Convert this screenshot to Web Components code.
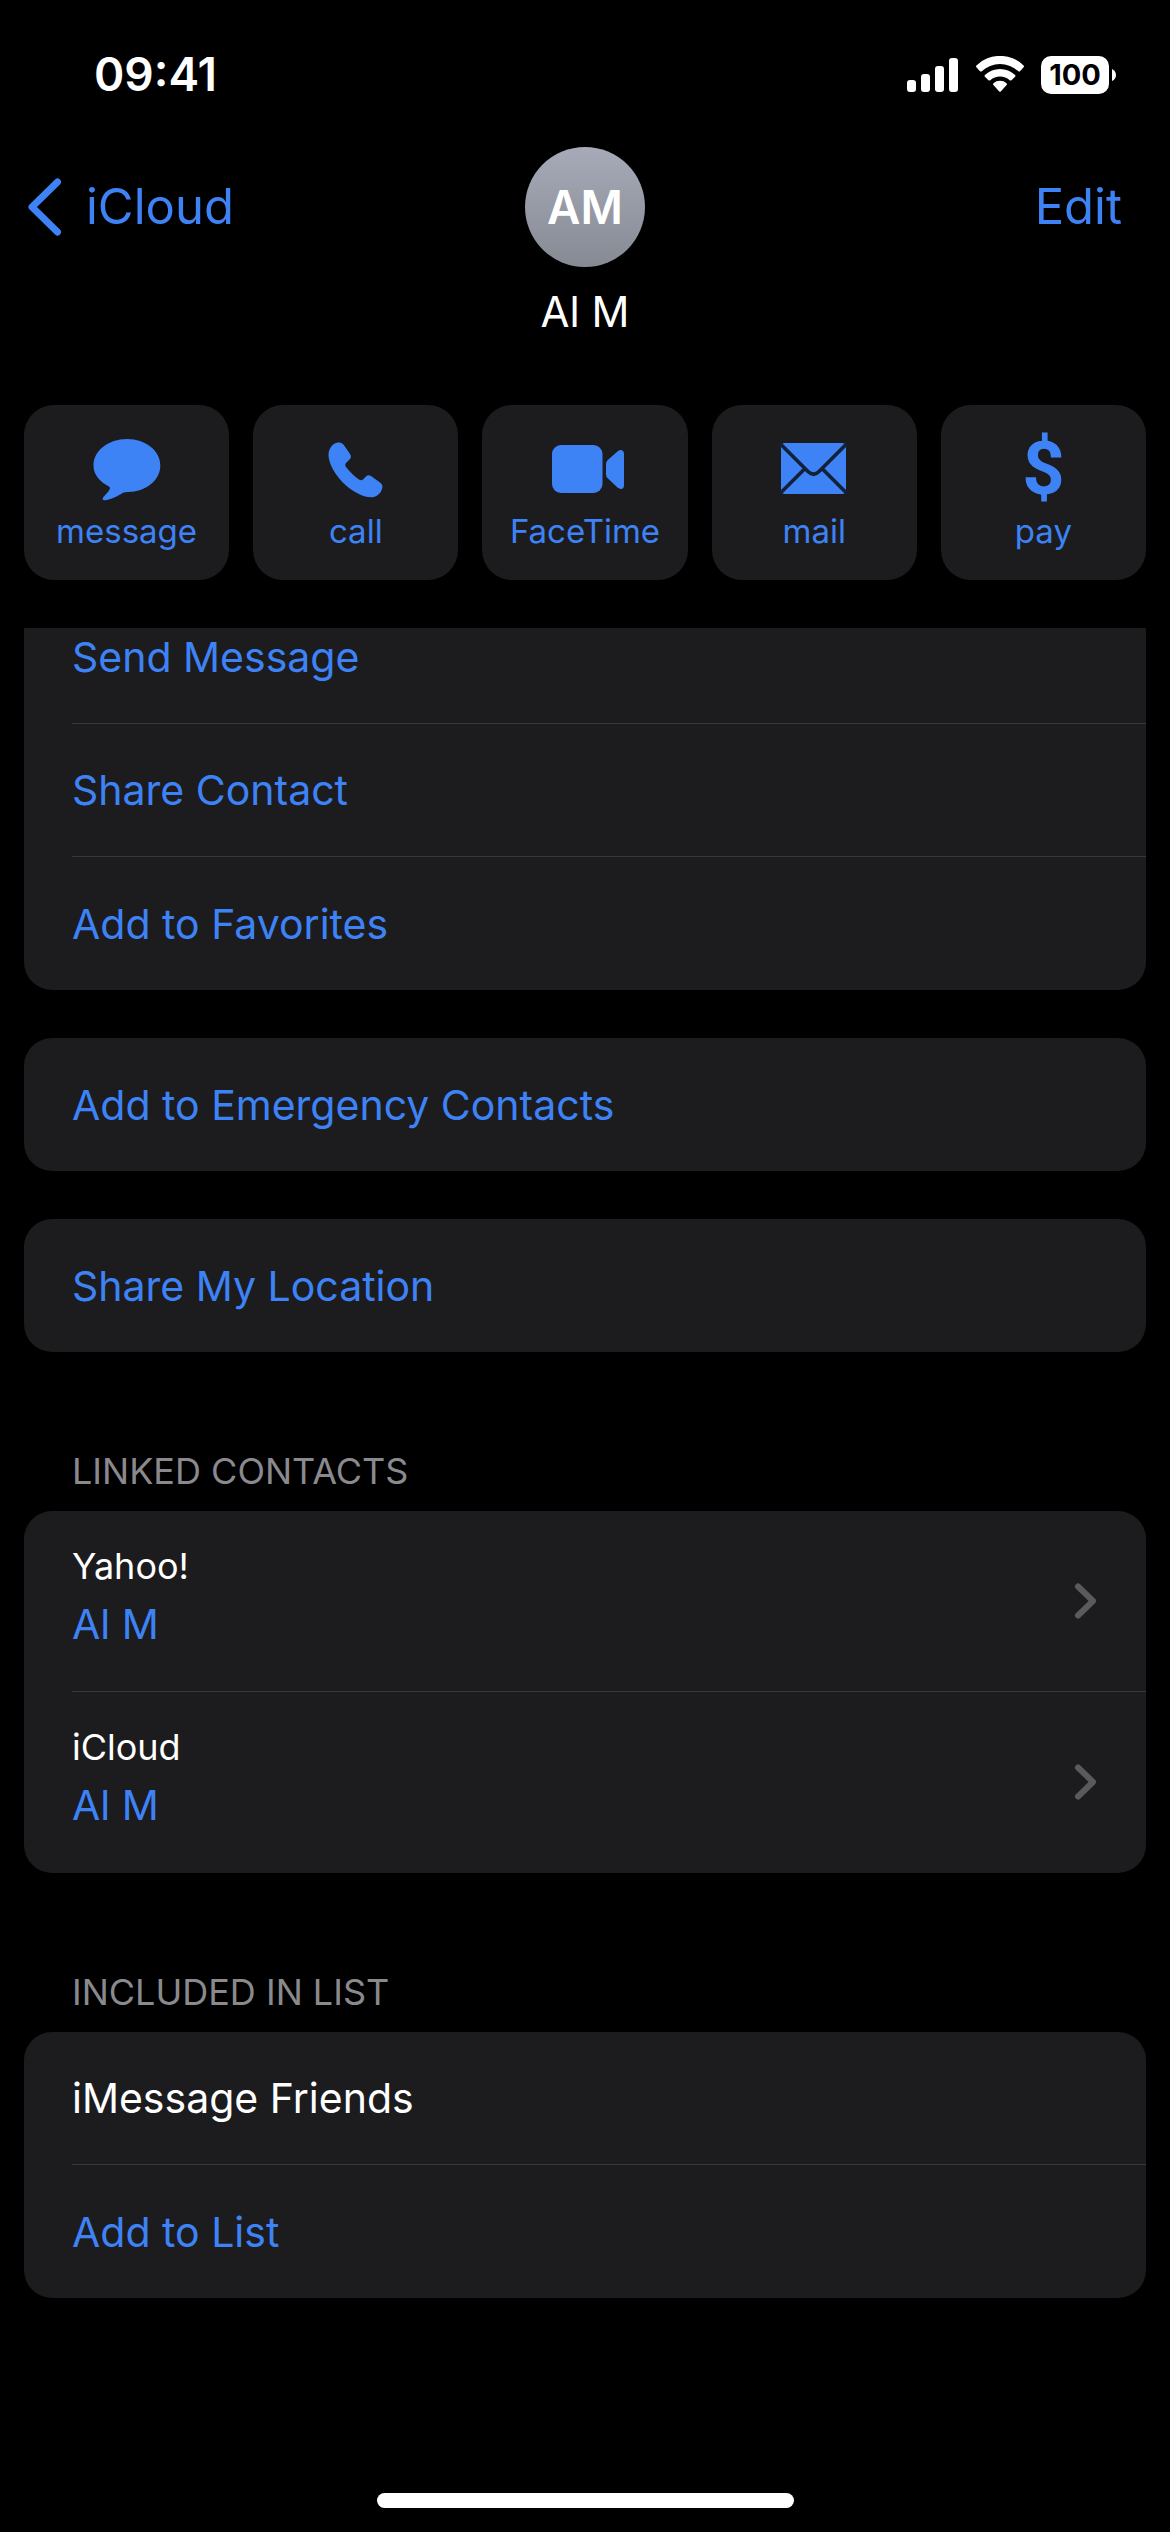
<!DOCTYPE html>
<html lang="en">
<head>
<meta charset="utf-8">
<meta name="viewport" content="width=device-width, initial-scale=1">
<title>Al M</title>
<style>
  :root {
    --blue: #3e83f6;
    --card: #1c1c1e;
    --line: #38383a;
    --grey: #8a8a8e;
    --text: #ffffff;
  }
  body {
    margin: 0;
    background: #000;
    color: var(--text);
    font-family: Inter, "Liberation Sans", sans-serif;
    font-size: 41px;
    line-height: 52px;
  }
</style>
</head>
<body>
<contact-page>
  <status-bar slot="status" time="09:41" battery="100"></status-bar>
  <contact-header slot="header" back="iCloud" action="Edit" initials="AM" name="Al M"></contact-header>

  <action-tile slot="actions" icon="message">message</action-tile>
  <action-tile slot="actions" icon="call">call</action-tile>
  <action-tile slot="actions" icon="video">FaceTime</action-tile>
  <action-tile slot="actions" icon="mail">mail</action-tile>
  <action-tile slot="actions" icon="pay">pay</action-tile>

  <list-card scrolled>
    <list-row>Send Message</list-row>
    <list-row>Share Contact</list-row>
    <list-row>Add to Favorites</list-row>
  </list-card>
  <list-card><list-row>Add to Emergency Contacts</list-row></list-card>
  <list-card><list-row>Share My Location</list-row></list-card>
  <list-card heading="LINKED CONTACTS">
    <linked-row source="Yahoo!">Al M</linked-row>
    <linked-row source="iCloud">Al M</linked-row>
  </list-card>
  <list-card heading="INCLUDED IN LIST">
    <list-row plain>iMessage Friends</list-row>
    <list-row>Add to List</list-row>
  </list-card>
</contact-page>

<script>
  class Base extends HTMLElement {
    connectedCallback() {
      if (this.shadowRoot) return;
      this.attachShadow({ mode: "open" }).innerHTML = this.view();
    }
    attr(name) { return this.getAttribute(name) || ""; }
  }

  customElements.define("contact-page", class extends Base {
    view() {
      return `
      <style>
        :host { display: flex; flex-direction: column; min-height: 100vh; }
        nav { display: grid; grid-template-columns: repeat(5, minmax(0, 1fr)); gap: 24px; padding: 68px 24px 48px; }
        main { display: flex; flex-direction: column; gap: 48px; padding: 0 24px; overflow: hidden; }
        footer { margin-top: auto; padding: 24px 0; display: flex; justify-content: center; }
        .home { width: 417px; max-width: 60%; height: 15px; border-radius: 8px; background: #fff; }
      </style>
      <slot name="status"></slot>
      <slot name="header"></slot>
      <nav aria-label="Actions"><slot name="actions"></slot></nav>
      <main><slot></slot></main>
      <footer><div class="home"></div></footer>`;
    }
  });

  customElements.define("status-bar", class extends Base {
    view() {
      return `
      <style>
        :host { display: flex; justify-content: space-between; align-items: center; padding: 55px 54px 53px 94px; }
        time { font-size: 46px; line-height: 39px; font-weight: 600; }
        .right { display: flex; align-items: center; }
        svg { display: block; fill: #fff; }
        .wifi { margin: 0 16px; }
        .battery { width: 68px; line-height: 38px; border-radius: 10px; background: #fff; color: #000; font-size: 29px; font-weight: 700; text-align: center; }
        .tip { margin-left: 3px; }
      </style>
      <time>${this.attr("time")}</time>
      <div class="right">
        <svg width="52" height="38" viewBox="0 0 52 38" role="img" aria-label="Signal">
          <rect x="0" y="24" width="9" height="12" rx="3"/>
          <rect x="14" y="18" width="9" height="18" rx="3"/>
          <rect x="28" y="10" width="9" height="26" rx="3"/>
          <rect x="42" y="2" width="9" height="34" rx="3"/>
        </svg>
        <svg class="wifi" width="50" height="38" viewBox="0 0 50 38" role="img" aria-label="Wi-Fi">
          <path d="M1.4 9.4A34 34 0 0 1 48.600 9.400Q49.400 10.300 48.600 11.200L45 15.200Q44.200 16 43.300 15.200A27 27 0 0 0 6.700 15.200Q5.800 16 5 15.200L1.400 11.200Q.6 10.300 1.400 9.400Z"/>
          <path d="M9.900 19A22 22 0 0 1 40.100 19Q41 19.900 40.100 20.800L36.500 24.200Q35.700 25 34.700 24.200A14.500 14.500 0 0 0 15.300 24.200Q14.300 25 13.500 24.200L9.900 20.800Q9 19.900 9.900 19Z"/>
          <path d="M18.400 27.300A10 10 0 0 1 31.600 27.300Q32.500 28.200 31.600 29.100L26 35.300Q25 36.300 24 35.300L18.400 29.100Q17.500 28.200 18.400 27.300Z"/>
        </svg>
        <div class="battery">${this.attr("battery")}</div>
        <svg class="tip" width="4" height="12" viewBox="0 0 4 12" aria-hidden="true"><path d="M0 0Q4 2 4 6T0 12Z"/></svg>
      </div>`;
    }
  });

  customElements.define("contact-header", class extends Base {
    view() {
      return `
      <style>
        :host { display: block; }
        .bar { display: grid; grid-template-columns: 1fr auto 1fr; align-items: center; padding: 0 28px; }
        a, button { color: var(--blue); font: inherit; font-size: 49px; line-height: 60px; text-decoration: none; }
        a { display: flex; align-items: center; gap: 24px; justify-self: start; }
        button { border: 0; background: none; padding: 0 20px; justify-self: end; }
        svg { display: block; }
        .avatar { width: 120px; line-height: 120px; border-radius: 50%; text-align: center; font-size: 46px; font-weight: 600; background: linear-gradient(#a7abb8, #868a93); }
        h1 { margin: 20px 0 0; font-size: 42px; line-height: 50px; font-weight: 400; text-align: center; }
      </style>
      <div class="bar">
        <a href="#contacts">
          <svg width="34" height="58" viewBox="0 0 34 58" aria-hidden="true"><path d="M29.500 4L4 29L29.500 54" fill="none" stroke="currentColor" stroke-width="7" stroke-linecap="round" stroke-linejoin="round"/></svg>
          <span>${this.attr("back")}</span>
        </a>
        <div class="avatar">${this.attr("initials")}</div>
        <button type="button">${this.attr("action")}</button>
      </div>
      <h1>${this.attr("name")}</h1>`;
    }
  });

  const icons = {
    message: `<path d="M40 8C58.500 8 73.300 19.600 73.300 34.500S58.500 61 41 61Q38 61 35.500 62C31 65 24 68.800 17.800 69.200Q14.500 69 16.200 66.200C19.500 63 22 60 23 57.500Q23.200 56.500 22 55.600C12.500 50.500 6.500 43.500 6.500 34.500C6.500 19.600 21.500 8 40 8Z"/>`,
    call: `<path d="M22 11.500C25 11 27 12.500 28.500 15L34 23C35.200 25 35.200 26.500 34 28L30 32C29 33.500 29 34.500 30 36C34 41 39 46 43 48.500C44.500 49.500 46 49.500 47 48.500L50 45.500C51.500 44 53 44 55 45L64 51.500C66.500 53.500 67 55.500 66 58C64.500 63 60 66.300 55 66.300C48 66.300 38 61.500 30 54.500C20 45.500 12.500 33 12.500 24C12.500 18 16 12.500 22 11.500Z"/>`,
    video: `<rect x="7" y="14" width="50.500" height="48" rx="9"/><path d="M61 33Q61 30.500 63 28.800L72.500 20.500Q75 18.500 77 19.200Q79 20 79 22.500V54.500Q79 57 77 57.800Q75 58.500 72.500 56.500L63 47.500Q61 46 61 43.500Z"/>`,
    mail: `<rect x="7" y="12" width="65" height="51" rx="4"/><path d="M6 12.500L34 40.500Q39.500 46 45 40.500L73 12.500M6 62.500L30.500 38M73 62.500L48.500 38" fill="none" stroke="#122038" stroke-width="3.600"/>`
  };

  customElements.define("action-tile", class extends Base {
    view() {
      const name = this.attr("icon");
      const icon = icons[name]
        ? `<svg width="80" height="72" viewBox="0 0 80 72" aria-hidden="true">${icons[name]}</svg>`
        : `<span class="sign" aria-hidden="true">$</span>`;
      return `
      <style>
        :host { display: block; }
        button { width: 100%; display: flex; flex-direction: column; align-items: center; gap: 8px; padding: 26px 0 29px; border: 0; border-radius: 30px; background: var(--card); color: var(--blue); font: inherit; font-size: 33px; line-height: 40px; }
        svg { display: block; fill: currentColor; }
        .sign { padding-top: 4px; font-family: Roboto, sans-serif; font-weight: 700; font-size: 74px; line-height: 68px; }
      </style>
      <button type="button">${icon}<span><slot></slot></span></button>`;
    }
  });

  customElements.define("list-card", class extends Base {
    view() {
      const heading = this.attr("heading");
      return `
      <style>
        :host { display: block; }
        :host([scrolled]) { margin-top: -37px; }
        h2 { margin: 0; padding: 49px 48px 18px; color: var(--grey); font-size: 36px; line-height: 44px; font-weight: 400; }
        .card { padding-left: 48px; border-radius: 28px; overflow: hidden; background: var(--card); }
        ::slotted(:not(:last-child)) { border-bottom: 1px solid var(--line); }
      </style>
      ${heading ? `<h2>${heading}</h2>` : ""}
      <div class="card"><slot></slot></div>`;
    }
  });

  customElements.define("list-row", class extends Base {
    view() {
      const tag = this.hasAttribute("plain") ? "div" : "button";
      return `
      <style>
        :host { display: flex; min-height: 133px; box-sizing: border-box; color: var(--blue); }
        :host([plain]) { color: var(--text); }
        button, div { flex: 1; display: flex; align-items: center; padding: 0; border: 0; background: none; color: inherit; font: inherit; text-align: left; }
      </style>
      <${tag}><span><slot></slot></span></${tag}>`;
    }
  });

  customElements.define("linked-row", class extends Base {
    view() {
      return `
      <style>
        :host { display: block; min-height: 181px; box-sizing: border-box; }
        a { display: flex; align-items: center; justify-content: space-between; padding: 29px 47px 29px 0; color: var(--blue); text-decoration: none; }
        .text { padding-bottom: 6px; }
        .source { display: block; color: var(--text); font-size: 36px; line-height: 52px; }
        .name { display: block; line-height: 64px; }
        svg { display: block; }
      </style>
      <a href="#linked">
        <span class="text"><span class="source">${this.attr("source")}</span><span class="name"><slot></slot></span></span>
        <svg width="26" height="38" viewBox="0 0 26 38" aria-hidden="true"><path d="M5 4.500L20 19L5 33.500" fill="none" stroke="#5a5a5e" stroke-width="6" stroke-linecap="round" stroke-linejoin="round"/></svg>
      </a>`;
    }
  });
</script>
</body>
</html>
